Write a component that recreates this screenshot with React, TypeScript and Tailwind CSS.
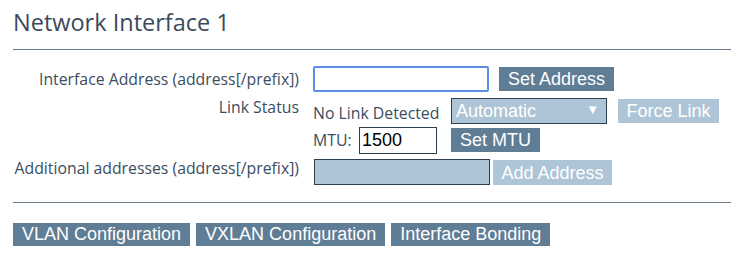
export default function App() {
  const label = "text-[15.8px] text-[#3b4d61] text-right w-[286px] shrink-0";
  const dark = "bg-[#5f7d95] text-white text-[18px] leading-[24px] px-[9px]";
  const light = "bg-[#adc5d6] text-white text-[18px] leading-[24px] px-[8.5px]";
  const tab = "bg-[#5f7d95] text-white text-[18px] leading-[23px] px-[9px]";
  return (
    <div className="w-[732px] h-[257px] bg-white pl-[13px] pr-[1px] pt-[6px] font-['Open_Sans',sans-serif]">
      <h2 className="text-[23.5px] leading-[32px] text-[#3b4a5c]">Network Interface 1</h2>
      <div className="mt-[11px] border-t border-[#6b7c8c]" />

      <div className="mt-[16px] flex flex-col">
        {/* row 1 */}
        <div className="flex items-center h-[26px]">
          <div className={`${label} leading-[20px]`}>Interface Address (address[/prefix])</div>
          <input
            className="ml-[14px] w-[176px] h-[26px] border-2 border-[#5b8ee6] rounded-[2px] outline-none bg-white"
          />
          <button className={`ml-[10px] ${dark} font-['Liberation_Sans',sans-serif]`}>Set Address</button>
        </div>

        {/* row 2 */}
        <div className="flex mt-[6px]">
          <div className={`${label} leading-[18px]`}>Link Status</div>
          <div className="ml-[14px] flex flex-col">
            <div className="flex items-center h-[26px]">
              <span className="text-[15.8px] leading-[20px] text-[#3b4d61] mt-[4px] w-[138px]">No Link Detected</span>
              <div className="relative w-[156px] h-[26px] border border-[#2c3e50] bg-[#adc5d6] text-white text-[18px] leading-[24px] pl-[4px] font-['Liberation_Sans',sans-serif]">
                Automatic
                <span className="absolute right-[7px] top-0 text-[13px] leading-[22px]">▼</span>
              </div>
              <button className={`ml-[11px] ${light} font-['Liberation_Sans',sans-serif]`}>Force Link</button>
            </div>
            <div className="flex items-center mt-[2px] h-[28px]">
              <span className="text-[15.8px] leading-[20px] text-[#3b4d61] w-[46px]">MTU:</span>
              <div className="w-[78px] h-[27px] border border-[#2c3e50] text-black text-[18px] leading-[25px] pl-[2px] font-['Liberation_Sans',sans-serif]">
                1500
              </div>
              <button className={`ml-[14px] ${dark} font-['Liberation_Sans',sans-serif]`}>Set MTU</button>
            </div>
          </div>
        </div>

        {/* row 4 */}
        <div className="flex mt-[5px]">
          <div className={`${label} leading-[18px]`}>Additional addresses (address[/prefix])</div>
          <div className="ml-[15px] w-[176px] h-[26px] border border-[#2c3e50] bg-[#adc5d6]" />
          <button className={`ml-[3px] mt-[1px] h-[25px] ${light} font-['Liberation_Sans',sans-serif]`}>Add Address</button>
        </div>
      </div>

      <div className="mt-[17px] border-t border-[#6b7c8c]" />

      <div className="mt-[20px] flex gap-[6px] font-['Liberation_Sans',sans-serif]">
        <button className={tab}>VLAN Configuration</button>
        <button className={tab}>VXLAN Configuration</button>
        <button className={tab}>Interface Bonding</button>
      </div>
    </div>
  );
}
